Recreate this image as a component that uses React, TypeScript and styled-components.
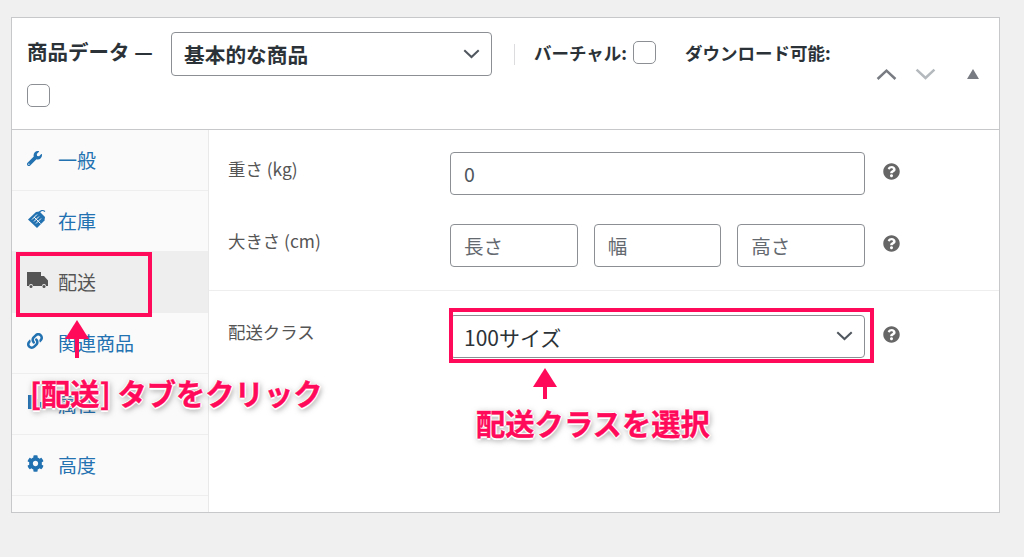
import * as React from 'react';
import styled, { createGlobalStyle } from 'styled-components';
import { FaCog, FaLink, FaQuestionCircle, FaWrench } from 'react-icons/fa';

const FONT = '"Noto Sans CJK JP", "Noto Sans", sans-serif';
const PINK = '#ff0a5a';
const BLUE = '#2271b1';

const GlobalStyle = createGlobalStyle`
  html, body {
    margin: 0;
    height: 557px;
    overflow: hidden;
    background: #f0f0f0;
    font-family: ${FONT};
  }
`;

const Chevron = ({ up, size = 17, color = '#50575e' }: { up?: boolean; size?: number; color?: string }) => (
  <svg width={size} height={size * 0.6} viewBox='0 0 20 12' fill='none'>
    <path
      d={up ? 'M1.5 10.5L10 2.5l8.5 8' : 'M1.5 1.5L10 9.5l8.5-8'}
      stroke={color}
      strokeWidth='2.4'
    />
  </svg>
);

const TagIcon = () => (
  <svg width='20' height='20' viewBox='0 0 20 20'>
    <path d='M1 10.500L9 3l3.500-.5L18 8l-.5 3.500L10 19z' fill={BLUE} />
    <path d='M5 10.500l5-5M7 12.500l5-5M9 14.500l5-5M7 8l6.500 6.500' stroke='#fafafa' strokeWidth='1' />
    <path d='M12 4c1-3 4-3 6-1.500' stroke={BLUE} strokeWidth='1.2' fill='none' />
  </svg>
);

const TruckIcon = () => (
  <svg width='21' height='17' viewBox='0 0 21 17'>
    <path d='M0 0h14v4h3l4 4.500V14h-2a2 2 0 0 0-4 0H6a2 2 0 0 0-4 0H0z' fill='#555' />
    <circle cx='4' cy='14.500' r='1.500' fill='#555' />
    <circle cx='17' cy='14.500' r='1.500' fill='#555' />
  </svg>
);

const BarsIcon = () => (
  <svg width='18' height='18' viewBox='0 0 18 18'>
    <path d='M1 2h4v14H1zM7 6h4v10H7zM13 9h4v7h-4z' fill={BLUE} />
  </svg>
);

const tabs = [
  { label: '一般', icon: <FaWrench size={15} /> },
  { label: '在庫', icon: <TagIcon /> },
  { label: '配送', icon: <TruckIcon />, active: true },
  { label: '関連商品', icon: <FaLink size={16} /> },
  { label: '属性', icon: <BarsIcon /> },
  { label: '高度', icon: <FaCog size={17} /> },
];

export default function App() {
  return (
    <>
      <GlobalStyle />
      <Page>
        <Card>
          <Header>
            <HeaderLeft>
              <Title>商品データ —</Title>
              <TypeSelect>
                基本的な商品
                <Chevron />
              </TypeSelect>
              <Separator />
              <CheckLabel>バーチャル:</CheckLabel>
              <CheckBox />
              <CheckLabel $gap>ダウンロード可能:</CheckLabel>
              <RowBreak />
              <CheckBox />
            </HeaderLeft>
            <HeaderActions>
              <Chevron up size={21} color='#787c82' />
              <Chevron size={21} color='#b4b9be' />
              <Triangle />
            </HeaderActions>
          </Header>
          <Body>
            <Sidebar>
              {tabs.map(tab => (
                <Tab key={tab.label} $active={tab.active}>
                  <TabIcon>{tab.icon}</TabIcon>
                  {tab.label}
                </Tab>
              ))}
            </Sidebar>
            <Panel>
              <Group>
                <Row>
                  <Label>重さ (kg)</Label>
                  <Field $wide $value>0</Field>
                  <Help size={17} />
                </Row>
                <Row>
                  <Label>大きさ (cm)</Label>
                  <Fields>
                    <Field>長さ</Field>
                    <Field>幅</Field>
                    <Field>高さ</Field>
                  </Fields>
                  <Help size={17} />
                </Row>
              </Group>
              <Group>
                <Row>
                  <Label>配送クラス</Label>
                  <ClassSelect>
                    100サイズ
                    <Chevron />
                  </ClassSelect>
                  <Help size={17} />
                </Row>
              </Group>
            </Panel>
          </Body>
        </Card>

        <TabHighlight />
        <UpArrow $left={69} $top={320} $height={38} />
        <TabNote>[配送] タブをクリック</TabNote>

        <SelectHighlight />
        <UpArrow $left={537} $top={368} $height={31} />
        <SelectNote>配送クラスを選択</SelectNote>
      </Page>
    </>
  );
}

const Page = styled.div`
  position: relative;
  width: 1024px;
  height: 557px;
  padding: 17px 24px 0 11px;
  box-sizing: border-box;
`;

const Card = styled.div`
  width: 989px;
  height: 496px;
  background: #fff;
  border: 1.5px solid #c6c8ca;
  box-sizing: border-box;
  display: flex;
  flex-direction: column;
`;

const Header = styled.div`
  height: 112px;
  flex: none;
  display: flex;
  box-sizing: border-box;
  border-bottom: 1.5px solid #c6c8ca;
  padding: 14px 20px 0 15px;
`;

const HeaderLeft = styled.div`
  flex: 1;
  display: flex;
  flex-wrap: wrap;
  align-items: center;
  align-content: flex-start;
`;

const Title = styled.div`
  font-size: 20.5px;
  font-weight: 700;
  color: #2c3338;
  width: 144px;
  margin-top: -6px;
  white-space: nowrap;
`;

const TypeSelect = styled.div`
  width: 321px;
  height: 44px;
  box-sizing: border-box;
  border: 1.5px solid #8c8f94;
  border-radius: 4px;
  padding: 0 11px 0 12px;
  display: flex;
  align-items: center;
  justify-content: space-between;
  font-size: 20.7px;
  font-weight: 700;
  color: #2c3338;
`;

const Separator = styled.div`
  width: 1px;
  height: 21px;
  background: #dcdcde;
  margin: 0 19px 0 22px;
`;

const CheckLabel = styled.div<{ $gap?: boolean }>`
  font-size: 17.5px;
  font-weight: 700;
  color: #2c3338;
  margin: 0 6px 4px ${p => (p.$gap ? '29px' : '0')};
  white-space: nowrap;
`;

const CheckBox = styled.div`
  width: 23px;
  height: 23px;
  box-sizing: border-box;
  border: 1.5px solid #8c8f94;
  border-radius: 5px;
  margin-bottom: 4px;
  background: #fff;
`;

const RowBreak = styled.div`
  flex-basis: 100%;
  height: 8px;
`;

const HeaderActions = styled.div`
  flex: none;
  display: flex;
  align-items: center;
  gap: 18px;
  height: 16px;
  margin: 34px 0 0 0;
`;

const Triangle = styled.div`
  width: 0;
  height: 0;
  margin-left: 13px;
  border-left: 6px solid transparent;
  border-right: 6px solid transparent;
  border-bottom: 10px solid #787c82;
`;

const Body = styled.div`
  flex: 1;
  display: flex;
  min-height: 0;
`;

const Sidebar = styled.div`
  width: 197px;
  flex: none;
  background: #fafafa;
  border-right: 1px solid #e9e9e9;
  box-sizing: border-box;
`;

const Tab = styled.div<{ $active?: boolean }>`
  height: 61px;
  box-sizing: border-box;
  display: flex;
  align-items: center;
  padding: 0 0 2px 15px;
  font-size: 19px;
  color: ${p => (p.$active ? '#555' : BLUE)};
  background: ${p => (p.$active ? '#eee' : 'transparent')};
  border-bottom: 1.5px solid ${p => (p.$active ? 'transparent' : '#eeeeee')};
`;

const TabIcon = styled.span`
  width: 31px;
  flex: none;
  display: flex;
  align-items: center;
  margin-top: -2px;
`;

const Panel = styled.div`
  flex: 1;
  display: flex;
  flex-direction: column;
`;

const Group = styled.div`
  display: flex;
  flex-direction: column;
  gap: 29px;
  padding: 22px 0 23px 19px;
  border-bottom: 1px solid #eee;
  &:last-child {
    border-bottom: none;
    padding-top: 24px;
  }
`;

const Row = styled.div`
  display: flex;
  align-items: flex-start;
`;

const Label = styled.div`
  width: 222px;
  flex: none;
  font-size: 17.4px;
  line-height: 34px;
  color: #555;
`;

const Fields = styled.div`
  width: 415px;
  display: flex;
  gap: 16px;
`;

const Field = styled.div<{ $wide?: boolean; $value?: boolean }>`
  ${p => (p.$wide ? 'width: 415px;' : 'flex: 1;')}
  height: 43px;
  box-sizing: border-box;
  border: 1.5px solid #8c8f94;
  border-radius: 4px;
  padding: 0 11px 0 13px;
  display: flex;
  align-items: center;
  font-size: 19.5px;
  color: ${p => (p.$value ? '#50575e' : '#646970')};
  background: #fff;
`;

const ClassSelect = styled(Field).attrs({ $wide: true })`
  justify-content: space-between;
  font-size: 21px;
  color: #2c3338;
`;

const Help = styled(FaQuestionCircle)`
  color: #666;
  margin: 11px 0 0 18px;
  flex: none;
`;

const TabHighlight = styled.div`
  position: absolute;
  left: 16px;
  top: 252px;
  width: 136px;
  height: 65px;
  box-sizing: border-box;
  border: 4px solid ${PINK};
`;

const SelectHighlight = styled.div`
  position: absolute;
  left: 449px;
  top: 308px;
  width: 425px;
  height: 55px;
  box-sizing: border-box;
  border: 4px solid ${PINK};
`;

const UpArrow = styled.div<{ $left: number; $top: number; $height: number }>`
  position: absolute;
  left: ${p => p.$left}px;
  top: ${p => p.$top}px;
  width: 16px;
  height: ${p => p.$height}px;
  &::before {
    content: '';
    position: absolute;
    left: 0;
    top: 0;
    border-left: 12px solid transparent;
    border-right: 12px solid transparent;
    border-bottom: 19px solid ${PINK};
    transform: translateX(-4px);
  }
  &::after {
    content: '';
    position: absolute;
    left: 6px;
    top: 16px;
    bottom: 0;
    width: 4px;
    background: ${PINK};
  }
`;

const Note = styled.div`
  position: absolute;
  font-size: 29.3px;
  font-weight: 700;
  line-height: 36px;
  color: ${PINK};
  white-space: nowrap;
  -webkit-text-stroke: 0.4px ${PINK};
  text-shadow:
    -1.5px 0 0 #fff, 1.5px 0 0 #fff, 0 -1.5px 0 #fff, 0 1.5px 0 #fff,
    0 0 4px rgba(255, 255, 255, 0.9),
    1px 2px 6px rgba(0, 0, 0, 0.55);
`;

const TabNote = styled(Note)`
  left: 30px;
  top: 374px;
`;

const SelectNote = styled(Note)`
  left: 476px;
  top: 404px;
`;
